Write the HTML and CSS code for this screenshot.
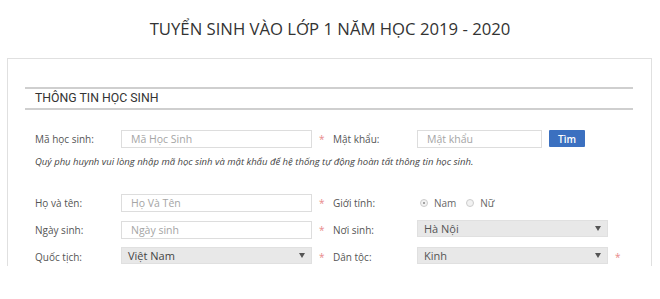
FILE: index.html
```html
<!DOCTYPE html>
<html lang="vi">
<head>
<meta charset="utf-8">
<link rel="stylesheet" href="styles.css">
</head>
<body>
<h1 class="title">TUYỂN SINH VÀO LỚP 1 NĂM HỌC 2019 - 2020</h1>
<div class="card">
  <div class="section">
    <h2 class="section-title">THÔNG TIN HỌC SINH</h2>
  </div>
  <div class="row row-first">
    <label class="label">Mã học sinh:</label>
    <div class="field"><input class="input" placeholder="Mã Học Sinh"></div>
    <span class="star">*</span>
    <label class="label">Mật khẩu:</label>
    <div class="field field-search">
      <input class="input input-short" placeholder="Mật khẩu">
      <button class="btn">Tìm</button>
    </div>
    <span class="star"></span>
  </div>
  <p class="note">Quý phụ huynh vui lòng nhập mã học sinh và mật khẩu để hệ thống tự động hoàn tất thông tin học sinh.</p>
  <div class="row">
    <label class="label">Họ và tên:</label>
    <div class="field"><input class="input" placeholder="Họ Và Tên"></div>
    <span class="star">*</span>
    <label class="label">Giới tính:</label>
    <div class="field radios">
      <span class="radio checked"></span><span class="radio-text">Nam</span>
      <span class="radio"></span><span class="radio-text">Nữ</span>
    </div>
    <span class="star"></span>
  </div>
  <div class="row">
    <label class="label">Ngày sinh:</label>
    <div class="field"><input class="input" placeholder="Ngày sinh"></div>
    <span class="star">*</span>
    <label class="label">Nơi sinh:</label>
    <div class="field"><div class="select">Hà Nội<span class="caret"></span></div></div>
    <span class="star"></span>
  </div>
  <div class="row">
    <label class="label">Quốc tịch:</label>
    <div class="field"><div class="select select-dark">Việt Nam<span class="caret"></span></div></div>
    <span class="star">*</span>
    <label class="label">Dân tộc:</label>
    <div class="field"><div class="select">Kinh<span class="caret"></span></div></div>
    <span class="star">*</span>
  </div>
</div>
</body>
</html>
```

FILE: styles.css
```css
html, body {
  margin: 0;
  padding: 0;
  background: #fff;
}
body {
  font-family: "Open Sans", "Liberation Sans", sans-serif;
  color: #555;
  width: 660px;
  height: 299px;
  overflow: hidden;
}
.title {
  margin: 0;
  height: 58px;
  line-height: 58px;
  text-align: center;
  font-size: 16.7px;
  font-weight: 400;
  color: #333;
}
.card {
  margin-left: 7px;
  width: 645px;
  height: 208px;
  border: 1px solid #e0e0e0;
  border-bottom: none;
  box-sizing: border-box;
  padding-top: 28px;
}
.section {
  margin-left: 17px;
  width: 608px;
  border-top: 2px solid #cfcfcf;
  border-bottom: 2px solid #cfcfcf;
  height: 23px;
  box-sizing: border-box;
}
.section-title {
  margin: 0 0 0 10px;
  font-family: "Roboto", "Open Sans", sans-serif;
  font-size: 12.3px;
  font-weight: 400;
  line-height: 19px;
  color: #333;
}
.row {
  display: flex;
  align-items: center;
  height: 19px;
  margin-left: 27px;
  margin-bottom: 8px;
}
.row-first {
  margin-top: 19px;
  margin-bottom: 0;
}
.label {
  font-size: 10px;
  color: #555;
}
.row > .label:first-child {
  width: 86px;
}
.row > .label:nth-child(4) {
  width: 84px;
}
.field {
  width: 191px;
  height: 19px;
  display: flex;
  align-items: center;
}
.star {
  width: 21px;
  padding-left: 7px;
  box-sizing: border-box;
  color: #e88a8a;
  font-size: 10px;
  line-height: 10px;
}
.input {
  width: 100%;
  height: 18px;
  box-sizing: border-box;
  border: 1px solid #ddd;
  padding: 0 0 0 9px;
  margin: 0;
  font-family: "Open Sans", "Liberation Sans", sans-serif;
  font-size: 10.5px;
  color: #555;
  outline: none;
  background: #fff;
}
.input::placeholder {
  color: #a5a5a5;
}
.input-short {
  width: 125px;
  flex: none;
}
.btn {
  margin-left: 7px;
  width: 36px;
  height: 17px;
  border: none;
  border-radius: 1px;
  background: #3b70c0;
  color: #fff;
  font-family: "Open Sans", "Liberation Sans", sans-serif;
  font-size: 10px;
  font-weight: 600;
  padding: 0;
}
.note {
  margin: 7px 0 24px 27px;
  font-size: 9.5px;
  font-style: italic;
  color: #444;
  height: 14px;
  line-height: 14px;
}
.radios {
  padding-left: 3px;
  box-sizing: border-box;
}
.radio {
  width: 8px;
  height: 8px;
  border-radius: 50%;
  border: 1px solid #ccc;
  background: #f2f2f2;
  box-sizing: border-box;
  position: relative;
}
.radio.checked::after {
  content: "";
  position: absolute;
  left: 2px;
  top: 2px;
  width: 2px;
  height: 2px;
  border-radius: 50%;
  background: #888;
}
.radio-text {
  font-size: 10px;
  color: #666;
  margin-left: 6px;
  margin-right: 10px;
}
.select {
  width: 100%;
  height: 17px;
  box-sizing: border-box;
  background: #e8e8e8;
  border: 1px solid #e0e0e0;
  padding-left: 6px;
  font-size: 11px;
  line-height: 15px;
  color: #555;
  position: relative;
  align-self: flex-start;
}
.select-dark {
  color: #444;
}
.caret {
  position: absolute;
  right: 6px;
  top: 5px;
  width: 0;
  height: 0;
  border-left: 3px solid transparent;
  border-right: 3px solid transparent;
  border-top: 5px solid #555;
}
```
